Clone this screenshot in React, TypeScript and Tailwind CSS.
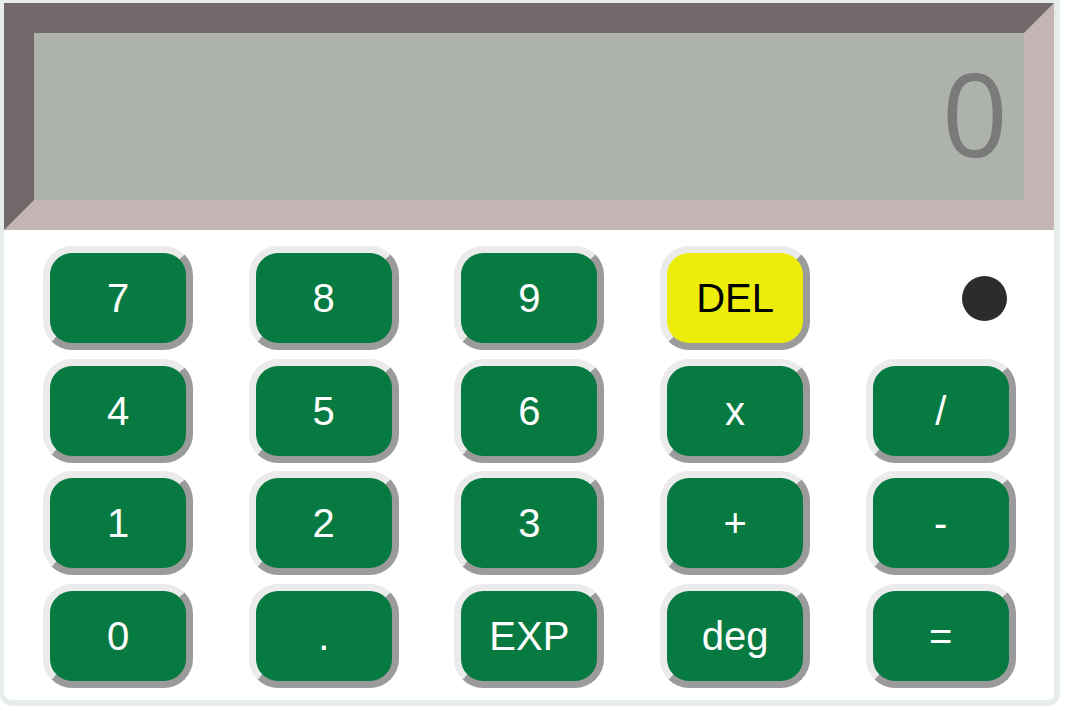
import React from "react"

const keys: (string | null)[] = [
  "7", "8", "9", "DEL", null,
  "4", "5", "6", "x", "/",
  "1", "2", "3", "+", "-",
  "0", ".", "EXP", "deg", "=",
]

function Key({ label }: { label: string }) {
  const del = label === "DEL"
  return (
    <button
      className={
        "h-[104px] w-[150px] rounded-[29px] border-[7px] border-t-[#ebebeb] border-l-[#ebebeb] border-r-[#9b9b9b] border-b-[#9b9b9b] flex items-center justify-center text-[40px] leading-none " +
        (del ? "bg-[#eded0c] text-black" : "bg-[#067a40] text-white")
      }
      style={{ fontFamily: '"Liberation Sans", Arial, sans-serif' }}
    >
      {label}
    </button>
  )
}

export default function App() {
  return (
    <div className="w-[1072px] h-[719px] bg-white">
      <div className="w-[1060px] h-[706px] border-t-[3px] border-l-4 border-r-[6px] border-b-[6px] border-[#e6ece9] rounded-b-[12px] bg-white flex flex-col">
        <div className="h-[227px] border-[30px] border-t-[#716869] border-l-[#716869] border-r-[#c4b5b5] border-b-[#c4b5b5] bg-[#adb3ab] flex items-center justify-end pr-[16px]">
          <span
            className="text-[116px] leading-none text-[#7a7a7a] mb-[10px]"
            style={{ fontFamily: '"Open Sans", "Noto Sans", sans-serif' }}
          >
            0
          </span>
        </div>
        <div className="grid grid-cols-[repeat(5,150px)] auto-rows-[104px] gap-x-[55.7px] gap-y-[8.7px] pt-[16px] pl-[39px]">
          {keys.map((k, i) =>
            k ? (
              <Key key={i} label={k} />
            ) : (
              <div key={i} className="flex items-center justify-end pr-[9px]">
                <div className="w-[45px] h-[45px] rounded-full bg-[#2b2d2c]" />
              </div>
            )
          )}
        </div>
      </div>
    </div>
  )
}
